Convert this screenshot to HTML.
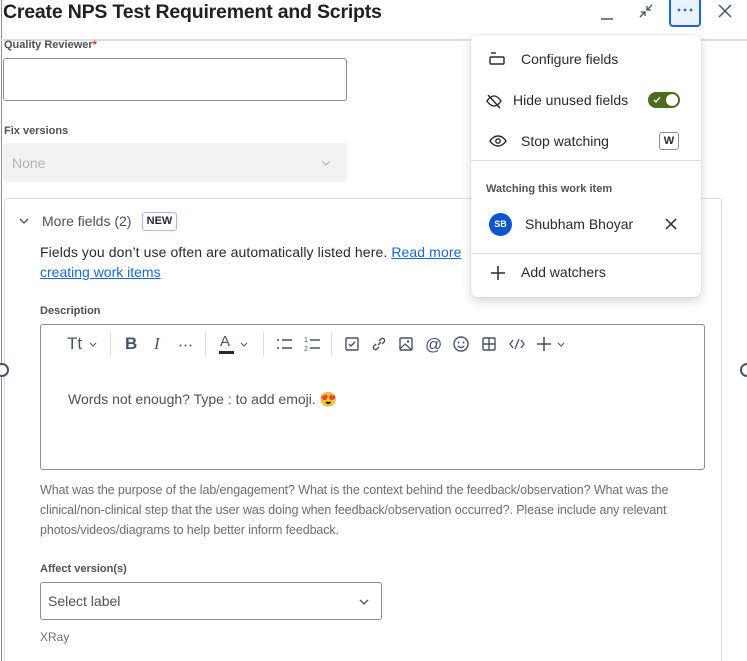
<!DOCTYPE html>
<html style="width:747px;height:661px;overflow:hidden"><head><meta charset="utf-8"><style>
*{box-sizing:border-box;margin:0;padding:0}
body{width:747px;height:661px;overflow:hidden;background:#fff;font-family:"Liberation Sans",sans-serif;color:#292a2e;position:relative}
.a{position:absolute;white-space:nowrap}
.lbl{font-size:11px;font-weight:bold;color:#505258}
.mi{font-size:14px;color:#292a2e}
svg{position:absolute;overflow:visible}
</style></head><body>
<div class="a" style="left:1px;top:0;width:1px;height:661px;background:#8c8f97"></div>
<div class="a" style="left:3px;top:1px;font-size:19.5px;font-weight:bold;color:#1f2024;letter-spacing:-0.2px">Create NPS Test Requirement and Scripts</div>
<div class="a" style="left:0;top:39px;width:747px;height:2px;background:#dcdde0"></div>
<svg style="left:600px;top:8px" width="14" height="14"><path d="M1 11h12" stroke="#44546f" stroke-width="1.5"/></svg>
<svg style="left:639px;top:4px" width="14" height="14"><path d="M13 1l-5 5M8 2v4h4M1 13l5-5M6 12V8H2" stroke="#44546f" stroke-width="1.3" fill="none"/></svg>
<div class="a" style="left:669px;top:0;width:32px;height:27px;border:2px solid #1868db;border-top:none;border-radius:0 0 4px 4px;background:#e9f2fe"></div>
<svg style="left:677px;top:8px" width="16" height="4"><circle cx="2" cy="2" r="1.4" fill="#1868db"/><circle cx="8" cy="2" r="1.4" fill="#1868db"/><circle cx="14" cy="2" r="1.4" fill="#1868db"/></svg>
<svg style="left:718px;top:4px" width="14" height="14"><path d="M1 1l12 12M13 1L1 13" stroke="#44546f" stroke-width="1.5"/></svg>

<div class="a lbl" style="left:4px;top:39px">Quality Reviewer<span style="color:#c9372c">*</span></div>
<div class="a" style="left:3px;top:58px;width:344px;height:43px;border:1px solid #8c8f97;border-radius:3px"></div>
<div class="a lbl" style="left:4px;top:125px">Fix versions</div>
<div class="a" style="left:3px;top:143px;width:344px;height:39px;background:#f2f2f3;border-radius:3px"></div>
<div class="a" style="left:12px;top:155px;font-size:14px;color:#b0b2b8">None</div>
<svg style="left:321px;top:160px" width="10" height="6"><path d="M1 1l4 4 4-4" stroke="#b0b2b8" fill="none"/></svg>

<div class="a" style="left:4px;top:198px;width:718px;height:480px;border:1px solid #dcdde0;border-radius:4px"></div>
<svg style="left:19px;top:218px" width="10" height="6"><path d="M1 1l4 4 4-4" stroke="#505258" stroke-width="1.3" fill="none"/></svg>
<div class="a" style="left:42px;top:213px;font-size:14px;color:#505258">More fields (2)</div>
<div class="a" style="left:142px;top:212px;width:35px;height:19px;border:1.5px solid #d3a3f5;border-radius:3px;font-size:11px;font-weight:bold;text-align:center;line-height:16px;color:#292a2e">NEW</div>
<div class="a" style="left:40px;top:244px;font-size:14px;color:#292a2e;letter-spacing:0.1px">Fields you don’t use often are automatically listed here. <span style="color:#1868db;text-decoration:underline">Read more</span></div>
<div class="a" style="left:40px;top:264px;font-size:14px;color:#1868db;text-decoration:underline">creating work items</div>

<div class="a lbl" style="left:40px;top:305px">Description</div>
<div class="a" style="left:40px;top:324px;width:665px;height:146px;border:1px solid #8c8f97;border-radius:3px"></div>
<div class="a" style="left:67px;top:334px;font-size:17px;color:#44546f">Tt</div>
<svg style="left:89px;top:342px" width="8" height="5"><path d="M1 1l3 3 3-3" stroke="#44546f" fill="none"/></svg>
<div class="a" style="left:110px;top:332px;width:1px;height:24px;background:#dcdde0"></div>
<div class="a" style="left:125px;top:334px;font-size:17px;font-weight:bold;color:#44546f">B</div>
<div class="a" style="left:154px;top:334px;font-size:17px;font-style:italic;color:#44546f;font-family:'Liberation Serif',serif">I</div>
<svg style="left:179px;top:344px" width="14" height="3"><circle cx="1.5" cy="1.5" r="1" fill="#44546f"/><circle cx="6.5" cy="1.5" r="1" fill="#44546f"/><circle cx="11.5" cy="1.5" r="1" fill="#44546f"/></svg>
<div class="a" style="left:205px;top:332px;width:1px;height:24px;background:#dcdde0"></div>
<div class="a" style="left:220px;top:333px;font-size:15px;color:#44546f">A</div>
<div class="a" style="left:219px;top:351px;width:15px;height:3px;background:#292a2e"></div>
<svg style="left:240px;top:342px" width="8" height="5"><path d="M1 1l3 3 3-3" stroke="#44546f" fill="none"/></svg>
<div class="a" style="left:263px;top:332px;width:1px;height:24px;background:#dcdde0"></div>
<svg style="left:277px;top:338px" width="16" height="14"><path d="M0 2h2M0 10h2M5 2h10M5 10h10" stroke="#44546f" stroke-width="1.5"/></svg>
<svg style="left:304px;top:335px" width="16" height="16"><path d="M6 5h10M6 13h10" stroke="#44546f" stroke-width="1.5"/><text x="0" y="7" font-size="7" fill="#44546f">1</text><text x="0" y="16" font-size="7" fill="#44546f">2</text></svg>
<div class="a" style="left:331px;top:332px;width:1px;height:24px;background:#dcdde0"></div>
<svg style="left:345px;top:337px" width="14" height="14"><rect x="1" y="1" width="12" height="12" rx="1" stroke="#44546f" stroke-width="1.4" fill="none"/><path d="M4 7l2 2 4-4" stroke="#44546f" stroke-width="1.4" fill="none"/></svg>
<svg style="left:372px;top:337px" width="14" height="14"><path d="M6 8l3-3M4 7l-2 2a2 2 0 003 3l2-2M10 7l2-2a2 2 0 00-3-3L7 4" stroke="#44546f" stroke-width="1.4" fill="none"/></svg>
<svg style="left:399px;top:337px" width="14" height="14"><rect x="1" y="1" width="12" height="12" rx="1" stroke="#44546f" stroke-width="1.4" fill="none"/><path d="M1 12l5-5 7 6" stroke="#44546f" stroke-width="1.2" fill="none"/><circle cx="9" cy="4.5" r="1.2" fill="#44546f"/></svg>
<div class="a" style="left:425px;top:335px;font-size:17px;color:#44546f">@</div>
<svg style="left:453px;top:336px" width="16" height="16"><circle cx="8" cy="8" r="7" stroke="#44546f" stroke-width="1.4" fill="none"/><circle cx="5.5" cy="6.5" r="1" fill="#44546f"/><circle cx="10.5" cy="6.5" r="1" fill="#44546f"/><path d="M5 10a3.5 3 0 006 0" stroke="#44546f" stroke-width="1.3" fill="none"/></svg>
<svg style="left:482px;top:337px" width="14" height="14"><rect x="1" y="1" width="12" height="12" rx="1" stroke="#44546f" stroke-width="1.4" fill="none"/><path d="M7 1v12M1 7h12" stroke="#44546f" stroke-width="1.4"/></svg>
<svg style="left:509px;top:338px" width="16" height="12"><path d="M4 2L1 6l3 4M12 2l3 4-3 4M10 1L6 11" stroke="#44546f" stroke-width="1.3" fill="none"/></svg>
<svg style="left:537px;top:337px" width="14" height="14"><path d="M7 0v14M0 7h14" stroke="#44546f" stroke-width="1.6"/></svg>
<svg style="left:557px;top:342px" width="8" height="5"><path d="M1 1l3 3 3-3" stroke="#44546f" fill="none"/></svg>
<div class="a" style="left:68px;top:391px;font-size:14px;color:#505258">Words not enough? Type : to add emoji. <span style="color:#e8356b">😍</span></div>

<div class="a" style="left:40px;top:480px;font-size:12.5px;color:#6b6e76;line-height:20px;letter-spacing:-0.1px">What was the purpose of the lab/engagement? What is the context behind the feedback/observation? What was the<br>clinical/non-clinical step that the user was doing when feedback/observation occurred?. Please include any relevant<br>photos/videos/diagrams to help better inform feedback.</div>
<div class="a lbl" style="left:40px;top:563px">Affect version(s)</div>
<div class="a" style="left:40px;top:582px;width:342px;height:38px;border:1px solid #8c8f97;border-radius:3px"></div>
<div class="a" style="left:48px;top:593px;font-size:14px;color:#505258">Select label</div>
<svg style="left:359px;top:599px" width="10" height="6"><path d="M1 1l4 4 4-4" stroke="#44546f" stroke-width="1.3" fill="none"/></svg>
<div class="a" style="left:40px;top:630px;font-size:12px;color:#6b6e76">XRay</div>

<div class="a" style="left:-5px;top:363px;width:14px;height:14px;border:2px solid #44546f;border-radius:50%;background:#fff"></div>
<div class="a" style="left:740px;top:363px;width:14px;height:14px;border:2px solid #44546f;border-radius:50%;background:#fff"></div>

<div class="a" style="left:471px;top:35px;width:230px;height:262px;background:#fff;border-radius:6px;box-shadow:0 4px 10px rgba(30,31,33,.18),0 0 1px rgba(30,31,33,.3)"></div>
<svg style="left:489px;top:52px" width="16" height="14"><path d="M2 1h5" stroke="#292a2e" stroke-width="1.4"/><rect x="1" y="5" width="14" height="7" rx="1" stroke="#292a2e" stroke-width="1.4" fill="none"/></svg>
<div class="a mi" style="left:521px;top:51px">Configure fields</div>
<svg style="left:486px;top:93px" width="16" height="16"><path d="M1 8s3-5 7-5 7 5 7 5-3 5-7 5-7-5-7-5z" stroke="#292a2e" stroke-width="1.3" fill="none"/><path d="M2 2l12 13" stroke="#292a2e" stroke-width="1.4"/></svg>
<div class="a mi" style="left:513px;top:92px">Hide unused fields</div>
<div class="a" style="left:648px;top:92px;width:32px;height:16px;border-radius:8px;background:#4c6b1f"></div>
<div class="a" style="left:666px;top:94px;width:12px;height:12px;border-radius:50%;background:#fff"></div>
<svg style="left:653px;top:96px" width="8" height="7"><path d="M1 4l2 2 4-5" stroke="#fff" stroke-width="1.3" fill="none"/></svg>
<svg style="left:489px;top:134px" width="18" height="14"><path d="M1 7s3-5 8-5 8 5 8 5-3 5-8 5-8-5-8-5z" stroke="#292a2e" stroke-width="1.4" fill="none"/><circle cx="9" cy="7" r="2.2" stroke="#292a2e" stroke-width="1.4" fill="none"/></svg>
<div class="a mi" style="left:521px;top:133px">Stop watching</div>
<div class="a" style="left:659px;top:132px;width:20px;height:18px;border:1px solid #8c8f97;border-radius:3px;font-size:11px;font-weight:bold;text-align:center;line-height:16px">W</div>
<div class="a" style="left:471px;top:160px;width:230px;height:1px;background:#dcdde0"></div>
<div class="a lbl" style="left:486px;top:183px;color:#505258">Watching this work item</div>
<div class="a" style="left:489px;top:213px;width:23px;height:23px;border-radius:50%;background:#0c55cf;color:#fff;font-size:9px;font-weight:bold;text-align:center;line-height:23px">SB</div>
<div class="a mi" style="left:525px;top:216px">Shubham Bhoyar</div>
<svg style="left:665px;top:218px" width="12" height="12"><path d="M1 1l10 10M11 1L1 11" stroke="#292a2e" stroke-width="1.5"/></svg>
<div class="a" style="left:471px;top:253px;width:230px;height:1px;background:#dcdde0"></div>
<svg style="left:491px;top:266px" width="14" height="14"><path d="M7 0v14M0 7h14" stroke="#292a2e" stroke-width="1.5"/></svg>
<div class="a mi" style="left:521px;top:264px">Add watchers</div>
</body></html>
